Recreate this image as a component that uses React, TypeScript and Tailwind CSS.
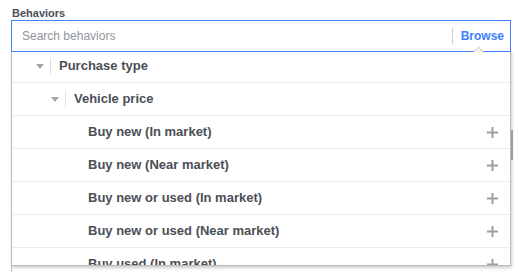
import React from "react";

const font = { fontFamily: '"Liberation Sans", Arial, Helvetica, sans-serif' };

function Tri() {
  return (
    <svg width="8" height="5" viewBox="0 0 8 5" className="shrink-0">
      <path d="M0 0 L8 0 L4 5 Z" fill="#a3a7ad" />
    </svg>
  );
}

function Plus() {
  return (
    <svg width="11" height="11" viewBox="0 0 11 11" className="shrink-0">
      <rect x="4.5" y="0" width="2" height="11" fill="#9a9ea5" />
      <rect x="0" y="4.5" width="11" height="2" fill="#9a9ea5" />
    </svg>
  );
}

const leaves = [
  "Buy new (In market)",
  "Buy new (Near market)",
  "Buy new or used (In market)",
  "Buy new or used (Near market)",
  "Buy used (In market)",
];

export default function App() {
  return (
    <div className="relative w-[519px] h-[272px] overflow-hidden bg-white" style={font}>
      <div className="pl-[12px] pt-[7px] h-[20px] text-[11px] leading-[13px] font-bold text-[#4b4f56]">
        Behaviors
      </div>
      <div className="ml-[11px] w-[500px] h-[32px] border border-[#4080ff] flex items-center bg-white relative z-10">
        <div className="flex-1 pl-[10px] text-[12px] text-[#90949c]">Search behaviors</div>
        <div className="w-px h-[16px] bg-[#ccd0d5]" />
        <div className="pl-[8px] pr-[6px] text-[12px] font-bold text-[#4080ff]">Browse</div>
        <div className="absolute left-[463px] top-[27px] w-[7px] h-[7px] rotate-45 bg-white border-t border-l border-[#ccd0d5]" />
      </div>
      <div className="absolute left-[11px] top-[50px] w-[500px] h-[216px] bg-white border-l border-r border-b border-[#b8bcc2] shadow-[1px_2px_3px_rgba(0,0,0,0.2)] overflow-hidden text-[13px] font-bold text-[#4b4f56]">
        <div className="h-[33px] border-b border-[#e9ebee] flex items-center pl-[24px]">
          <Tri />
          <div className="ml-[6px] w-px h-[16px] bg-[#dddfe2]" />
          <div className="ml-[8px]">Purchase type</div>
        </div>
        <div className="h-[33px] border-b border-[#e9ebee] flex items-center pl-[39px]">
          <Tri />
          <div className="ml-[6px] w-px h-[16px] bg-[#dddfe2]" />
          <div className="ml-[8px]">Vehicle price</div>
        </div>
        {leaves.map((t) => (
          <div key={t} className="h-[33px] border-b border-[#e9ebee] flex items-center pl-[76px] pr-[12px]">
            <div className="flex-1">{t}</div>
            <Plus />
          </div>
        ))}
      </div>
      <div className="absolute left-[511px] top-[130px] w-[2px] h-[30px] bg-[#9a9ea5]" />
      <div className="absolute left-[11px] top-[266px] w-px h-[6px] bg-[#b8bcc2]" />
    </div>
  );
}
